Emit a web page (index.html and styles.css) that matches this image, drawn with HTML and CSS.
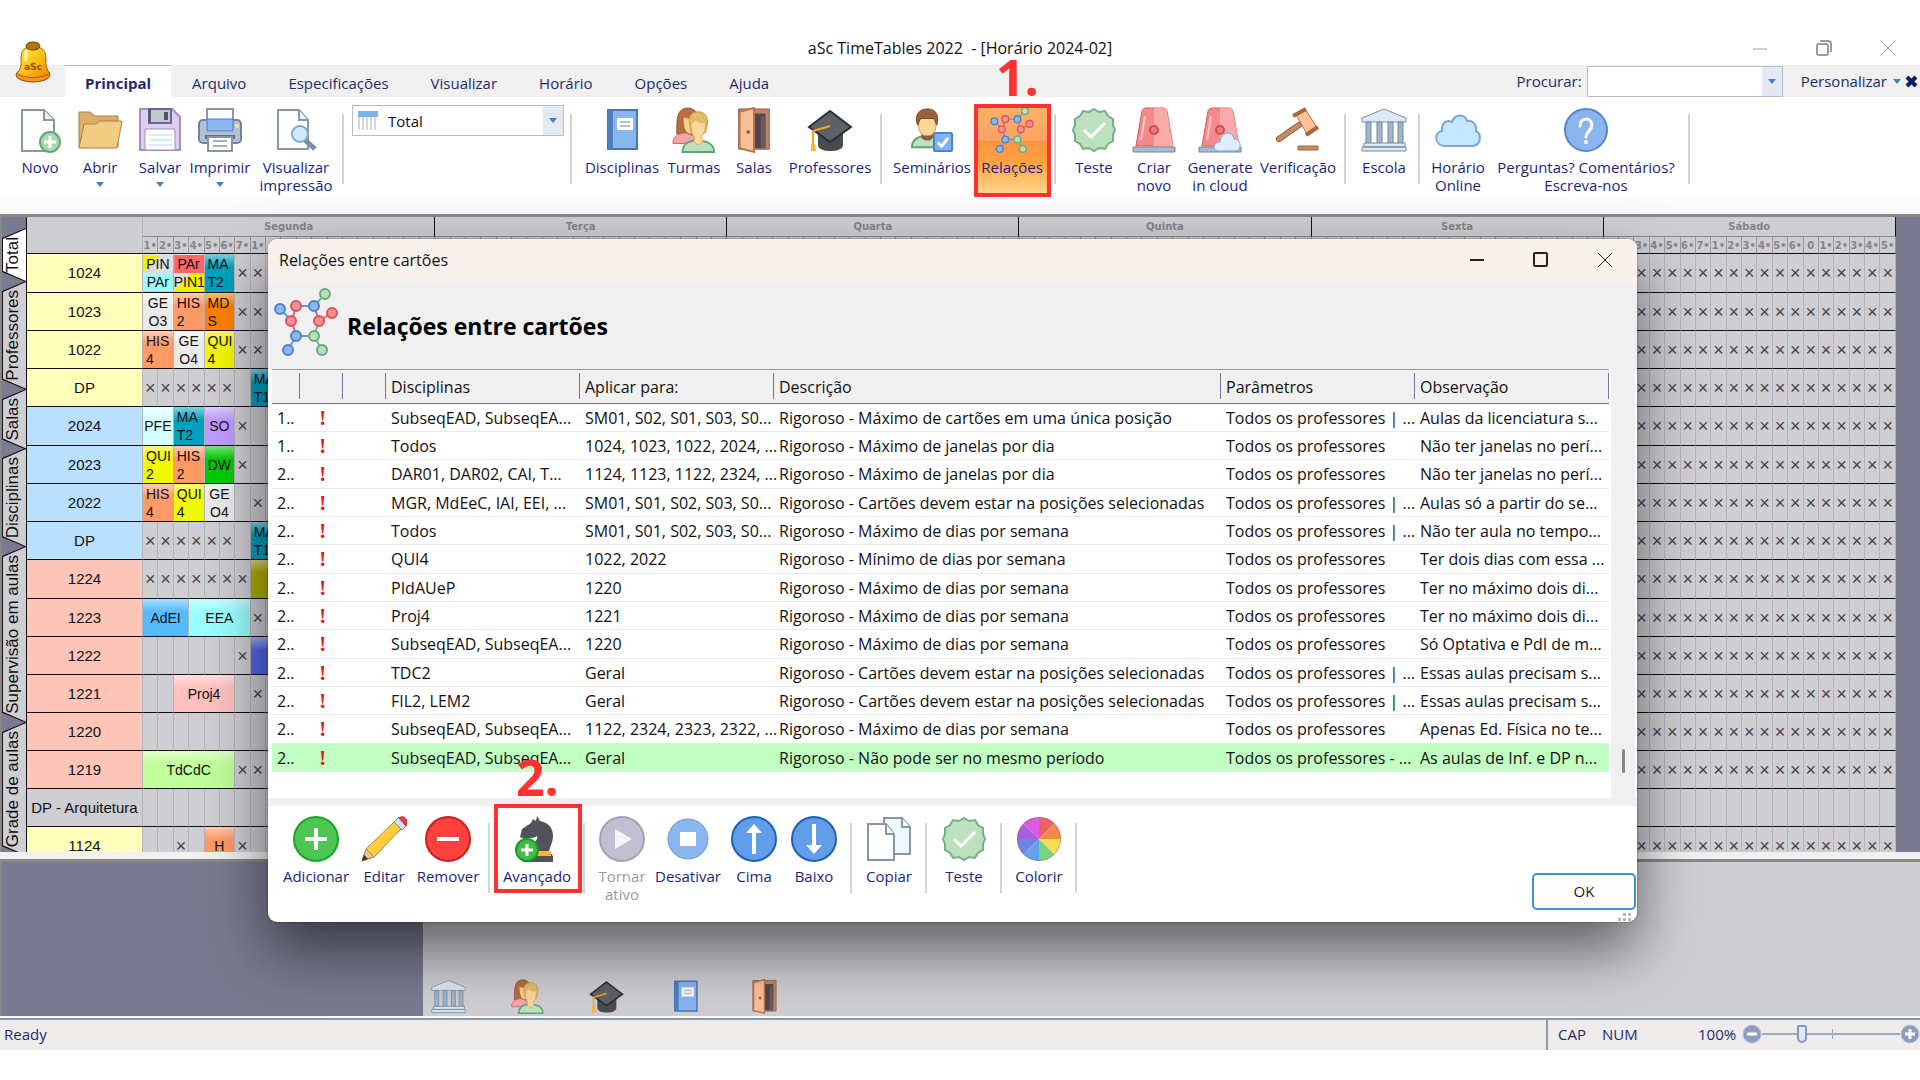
FILE: index.html
```html
<!DOCTYPE html>
<html lang="pt-BR">
<head>
<meta charset="utf-8">
<title>aSc TimeTables 2022 - [Horário 2024-02]</title>
<link rel="stylesheet" href="styles.css">
</head>
<body>
<svg class="sprite" aria-hidden="true">
  <symbol id="i-new" viewBox="0 0 44 46"><path d="M4 3h22l10 10v31H4z" fill="#fff" stroke="#8797a8" stroke-width="2"/><path d="M26 3v10h10" fill="#eef2f6" stroke="#8797a8" stroke-width="2"/><circle cx="32" cy="35" r="10" fill="#a9d8b1" stroke="#63a878" stroke-width="2"/><path d="M32 29v12M26 35h12" stroke="#fff" stroke-width="3"/></symbol>
  <symbol id="i-open" viewBox="0 0 44 46"><path d="M1 5h11l5 4h23v31H1z" fill="#dcae66" stroke="#a98243"/><path d="M6 17h12l4-3h22l-5 27H1z" fill="#f3cc83" stroke="#a98243"/></symbol>
  <symbol id="i-save" viewBox="0 0 44 46"><path d="M2 2h32l8 8v33H2z" fill="#dccff1" stroke="#a58fc2" stroke-width="2"/><path d="M11 2h22v14H11z" fill="#c0c8d2" stroke="#6d6788" stroke-width="2"/><path d="M10 2h3v14h-3z" fill="#5f5876"/><path d="M26 5h4v8h-4z" fill="#4f5868"/><path d="M7 22h30v21H7z" fill="#fff" stroke="#a58fc2"/><path d="M11 28h23M11 33h23M11 38h23" stroke="#d5edfb" stroke-width="2"/></symbol>
  <symbol id="i-print" viewBox="0 0 44 46"><path d="M9 2h26v14H9z" fill="#fff" stroke="#8797a8" stroke-width="2"/><rect x="1" y="13" width="42" height="23" rx="4" fill="#b3c2d3" stroke="#70839a" stroke-width="2"/><path d="M9 12h26v12H9z" fill="#8ab5ee" stroke="#4f7fc0"/><circle cx="39" cy="19" r="2" fill="#ffe68c"/><path d="M7 30h30" stroke="#5e6d80" stroke-width="4"/><path d="M10 30h24v14H10z" fill="#fff" stroke="#8797a8" stroke-width="2"/><path d="M15 34h14M15 39h14" stroke="#a6b1bd" stroke-width="2"/></symbol>
  <symbol id="i-preview" viewBox="0 0 44 46"><path d="M4 3h21l9 10v29H4z" fill="#fff" stroke="#8797a8" stroke-width="2"/><path d="M25 3v10h9" fill="#eef2f6" stroke="#8797a8" stroke-width="2"/><path d="m31 33 10 9" stroke="#7390ad" stroke-width="5"/><circle cx="26" cy="27" r="8" fill="#cdebff" stroke="#84a5c4" stroke-width="2"/></symbol>
  <symbol id="i-book" viewBox="0 0 44 46"><path d="M8 3h29v39H8z" fill="#8ab5ee" stroke="#4877b7" stroke-width="2"/><path d="M8 3h5v39H8z" fill="#4b7fc2"/><path d="M17 11h16v12H17z" fill="#fff"/><path d="M20 15h10M20 19h10" stroke="#b8bec6" stroke-width="2"/></symbol>
  <symbol id="i-people" viewBox="0 0 46 48"><path d="M5 28C5 12 5 2 16 1c8 0 12 6 10 14l-4 14z" fill="#b66d40" stroke="#8d5430"/><path d="M1 38c0-8 7-11 14-11l9 4-4 7z" fill="#f5a5aa" stroke="#d85d66"/><path d="M12 11l10 2v14c-6 3-10-3-10-16z" fill="#fad08a"/><path d="M11 47c0-8 6-12 15-12s18 3 18 12z" fill="#bde1bf" stroke="#5fa472" stroke-width="2"/><path d="M18 15c0-9 6-10 10-10 6 0 10 5 9 13l-2 9H20z" fill="#e2bc68" stroke="#c39b4c"/><path d="M20 18l4-5c4 4 8 3 11 3 0 8-1 11-4 15l1 5c-2 4-7 4-9 0v-5c-2-3-3-7-3-13z" fill="#fad899" stroke="#d6ad67"/></symbol>
  <symbol id="i-door" viewBox="0 0 44 48"><path d="M6 2h32v42H6z" fill="#bf8666" stroke="#8c5d45"/><path d="M22 7h12v36H22z" fill="#52444a"/><path d="M29 10h5v33h-5z" fill="#6b5960"/><path d="M7 5l15-4v46L7 43z" fill="#fbbf97" stroke="#b6764f" stroke-width="2"/><circle cx="16" cy="26" r="2" fill="#9b6144"/></symbol>
  <symbol id="i-cap" viewBox="0 0 46 46"><path d="M11 19v19c0 8 25 8 25 0V19z" fill="#4a4b4d"/><path d="M23 4l21 16-21 15L2 20z" fill="#5f6164" stroke="#26303c" stroke-width="2"/><path d="M23 19L6 24v17" fill="none" stroke="#f4a62a" stroke-width="2"/><path d="M4 37h4l1 7H4z" fill="#f9b53b"/></symbol>
  <symbol id="i-seminar" viewBox="0 0 44 48"><path d="M1 42c0-8 7-12 16-12s17 4 17 12z" fill="#bde1bf" stroke="#5fa472" stroke-width="2"/><path d="M11 26h12v6c-3 4-9 4-12 0z" fill="#8a5c3b"/><path d="M8 12h18v9c0 5-4 9-9 9s-9-4-9-9z" fill="#fad899" stroke="#c59a5a"/><path d="M7 19C3 8 9 2 17 2s13 5 10 17l-3-7H10z" fill="#9a623c" stroke="#78472a"/><rect x="24" y="27" width="19" height="19" rx="2" fill="#7fb0f0" stroke="#4a80c8" stroke-width="2"/><path d="M28 37l4 4 7-9" fill="none" stroke="#fff" stroke-width="3"/></symbol>
  <symbol id="i-net" viewBox="0 0 64 68"><path d="M6 21l12 12M22 48l-8 14M22 48l18 0M22 18h18" stroke="#6a97cf" stroke-width="2"/><path d="M22 18l-4 15 4 15M45 33l13-8M45 33l-5-15" stroke="#dd6a6d" stroke-width="2" fill="none"/><path d="M40 18L51 6M45 33l-5 15 8 14" stroke="#75b287" stroke-width="2" fill="none"/><g stroke-width="2"><g fill="#8bb7f0" stroke="#4c82c9"><circle cx="6" cy="21" r="5"/><circle cx="40" cy="18" r="5"/><circle cx="22" cy="48" r="5"/><circle cx="14" cy="62" r="5"/></g><g fill="#f78f90" stroke="#d9565a"><circle cx="22" cy="18" r="5"/><circle cx="58" cy="25" r="5"/><circle cx="45" cy="33" r="5"/><circle cx="17" cy="33" r="5"/></g><g fill="#b7dfba" stroke="#69ab7d"><circle cx="51" cy="6" r="5"/><circle cx="40" cy="48" r="5"/><circle cx="48" cy="62" r="5"/></g></g></symbol>
  <symbol id="i-check" viewBox="0 0 44 46"><path d="M22 2l5 3 6-1 3 5 5 3 0 6 2 5-2 5 0 6-5 3-3 5-6-1-5 3-5-3-6 1-3-5-5-3 0-6-2-5 2-5 0-6 5-3 3-5 6 1z" fill="#bde1bf" stroke="#72b088" stroke-width="2"/><path d="M12 23l7 7 14-14" fill="none" stroke="#fff" stroke-width="3"/></symbol>
  <symbol id="i-siren" viewBox="0 0 44 46"><path d="M4 39L10 4q1-3 4-3h17q3 0 4 3l6 35z" fill="#f48b8b" stroke="#d9585c"/><path d="M22 1h9q3 0 4 3l6 35H22z" fill="#f8a9a9"/><path d="M13 9L9 33" stroke="#fbc9c9" stroke-width="2"/><circle cx="22" cy="23" r="4" fill="#ee7c7e" stroke="#d04c52" stroke-width="2"/><path d="M1 40h42v5H1z" fill="#a9bac9" stroke="#7389a0"/></symbol>
  <symbol id="i-sirencloud" viewBox="0 0 44 46"><use href="#i-siren" width="44" height="46"/><path d="M20 44c-6-1-5-9 2-9 1-11 13-12 14-3 7 0 9 11 1 12z" fill="#dceeff" stroke="#7fa5d0"/></symbol>
  <symbol id="i-gavel" viewBox="0 0 44 46"><path d="M3 32l20-14" stroke="#8f5d3c" stroke-width="6" stroke-linecap="round"/><path d="M3 32l20-14" stroke="#c98c62" stroke-width="4" stroke-linecap="round"/><path d="M20 8l10-5 11 18-10 6z" fill="#fdc19b" stroke="#a8704c"/><path d="M17 9l13-7M30 28l12-8" stroke="#a5683f" stroke-width="4"/><path d="M22 39h20v4H22z" fill="#c98c62" stroke="#9a6644"/></symbol>
  <symbol id="i-school" viewBox="0 0 46 46"><path d="M23 2l22 9v4H1v-4z" fill="#dfe8f0" stroke="#7b93ac"/><path d="M5 15h5v22H5zM16 15h5v22h-5zM27 15h5v22h-5zM37 15h5v22h-5z" fill="#a2b5ca" stroke="#6f89a4"/><path d="M3 36h41v4H3zM1 40h44v4H1z" fill="#dfe8f0" stroke="#6f89a4"/></symbol>
  <symbol id="i-cloud" viewBox="0 0 46 46"><path d="M9 39C-1 38-1 25 7 24 6 16 12 12 17 15 20 6 31 7 32 14c6-1 10 4 9 10 6 3 5 14-3 15z" fill="#c3e7ff" stroke="#7ea6cf" stroke-width="2"/></symbol>
  <symbol id="i-help" viewBox="0 0 46 46"><circle cx="23" cy="23" r="21" fill="#8ab5ee" stroke="#5486c9" stroke-width="2"/><path d="M17 19c0-9 12-9 12-1 0 6-6 6-6 12" fill="none" stroke="#fff" stroke-width="3" stroke-linecap="round"/><circle cx="23" cy="35" r="2" fill="#fff"/></symbol>
  <symbol id="i-add" viewBox="0 0 46 46"><circle cx="23" cy="23" r="22" fill="#4cc552" stroke="#1ca32a" stroke-width="2"/><path d="M23 12v22M12 23h22" stroke="#fff" stroke-width="4"/></symbol>
  <symbol id="i-remove" viewBox="0 0 46 46"><circle cx="23" cy="23" r="22" fill="#ff423d" stroke="#c62020" stroke-width="2"/><path d="M12 23h22" stroke="#fff" stroke-width="4"/></symbol>
  <symbol id="i-edit" viewBox="0 0 46 46"><path d="M1 45l4-12L35 4l7 7L13 41z" fill="#ffcc3d" stroke="#a8884a"/><path d="M1 45l4-12 8 8z" fill="#efc292" stroke="#a8884a"/><path d="M1 45l2-6 4 4z" fill="#333"/><path d="M33 6l5-5 8 8-5 5z" fill="#d2e2f4" stroke="#74899f"/><path d="M38 2q4-3 7 1t0 7z" fill="#f23b3b" stroke="#c02828"/></symbol>
  <symbol id="i-knight" viewBox="0 0 46 46"><path d="M9 46v-4l5-5c0-8 11-11 9-17-4 3-8 1-11 4l-6-3 2-8 9-6 2-4 3 2 1-5 3 5c12 2 16 13 11 24l-2 6 4 5v6z" fill="#50545a"/><path d="M18 35h19v5H18z" fill="#ffb43b"/><circle cx="13" cy="34" r="11" fill="#3fbd48" stroke="#1b9b2a" stroke-width="2"/><path d="M13 28v12M7 34h12" stroke="#fff" stroke-width="3"/></symbol>
  <symbol id="i-play" viewBox="0 0 46 46"><circle cx="23" cy="23" r="22" fill="#c2bfd0" stroke="#a5a0ba" stroke-width="2"/><path d="M16 13l17 10-17 10z" fill="#f6f5fa"/></symbol>
  <symbol id="i-stop" viewBox="0 0 46 46"><circle cx="23" cy="23" r="20" fill="#8ab5ee" stroke="#7099cc"/><path d="M15 16h16v14H15z" fill="#fff"/></symbol>
  <symbol id="i-up" viewBox="0 0 46 46"><circle cx="23" cy="23" r="22" fill="#629de9" stroke="#1c61bb" stroke-width="2"/><path d="M23 38V14" stroke="#fff" stroke-width="4"/><path d="M15 17l8-9 8 9z" fill="#fff"/></symbol>
  <symbol id="i-down" viewBox="0 0 46 46"><circle cx="23" cy="23" r="22" fill="#629de9" stroke="#1c61bb" stroke-width="2"/><path d="M23 8v24" stroke="#fff" stroke-width="4"/><path d="M15 29l8 9 8-9z" fill="#fff"/></symbol>
  <symbol id="i-copy" viewBox="0 0 46 46"><path d="M18 2h18l8 9v27H18z" fill="#eff7ff" stroke="#8797a8" stroke-width="2"/><path d="M36 2v9h8" fill="#fff" stroke="#8797a8" stroke-width="2"/><path d="M2 8h18l8 10v26H2z" fill="#fff" stroke="#8797a8" stroke-width="2"/><path d="M20 8v10h8" fill="#fff" stroke="#8797a8" stroke-width="2"/></symbol>
  <symbol id="i-wheel" viewBox="0 0 46 46"><g transform="translate(23 23)"><path d="M0 0V-22A22 22 0 0 1 15.6-15.6z" fill="#e96161"/><path d="M0 0L15.6-15.6A22 22 0 0 1 22 0z" fill="#f08a4b"/><path d="M0 0H22A22 22 0 0 1 15.6 15.6z" fill="#ffdc57"/><path d="M0 0L15.6 15.6A22 22 0 0 1 0 22z" fill="#78d47c"/><path d="M0 0V22A22 22 0 0 1-15.6 15.6z" fill="#64a0ec"/><path d="M0 0L-15.6 15.6A22 22 0 0 1-22 0z" fill="#6e84e6"/><path d="M0 0H-22A22 22 0 0 1-15.6-15.6z" fill="#ac5ee0"/><path d="M0 0L-15.6-15.6A22 22 0 0 1 0-22z" fill="#dc5be0"/><circle r="21.5" fill="none" stroke="#8e6a86" stroke-opacity=".5"/></g></symbol>
  <symbol id="i-caret" viewBox="0 0 8 5"><path d="M0 0h8L4 5z" fill="#4a7fb8"/></symbol>
</svg>

<header class="titlebar">
  <h1 class="title">aSc TimeTables 2022&nbsp; - [Horário 2024-02]</h1>
  <div class="wincontrols">
    <button aria-label="Minimizar"><svg width="16" height="16"><path d="M1 9h14" stroke="#999"/></svg></button>
    <button aria-label="Restaurar"><svg width="16" height="16" fill="none" stroke="#999" stroke-width="2"><rect x="1" y="4" width="11" height="11" rx="2"/><path d="M4 1h8q3 0 3 3v8"/></svg></button>
    <button aria-label="Fechar"><svg width="16" height="16"><path d="M1 1l14 14M15 1L1 15" stroke="#999"/></svg></button>
  </div>
</header>

<nav class="menubar">
  <div class="logo"><svg width="38" height="42" viewBox="0 0 38 42"><defs><linearGradient id="bell" x2="1" y2="1"><stop stop-color="#ffe94a"/><stop offset=".5" stop-color="#fdc414"/><stop offset="1" stop-color="#ef7c0a"/></linearGradient></defs><ellipse cx="19" cy="34" rx="17" ry="7" fill="#f59511" stroke="#8d4a0b"/><path d="M3 32q5-4 4-14C7 9 10 6 19 6s13 3 13 12q-1 10 4 14c-6 6-27 6-33 0z" fill="url(#bell)" stroke="#a4620c"/><ellipse cx="19" cy="5" rx="7" ry="4" fill="#b5740f" stroke="#6e3d05"/><ellipse cx="12" cy="15" rx="2" ry="6" fill="#fff6a0"/><text x="19" y="29" class="bell-text">aSc</text></svg></div>
  <a class="tab tab-on" href="#principal">Principal</a>
  <a class="tab" href="#arquivo">Arquivo</a>
  <a class="tab" href="#especificacoes">Especificações</a>
  <a class="tab" href="#visualizar">Visualizar</a>
  <a class="tab" href="#horario">Horário</a>
  <a class="tab" href="#opcoes">Opções</a>
  <a class="tab" href="#ajuda">Ajuda</a>
  <div class="search">
    <label for="busca">Procurar:</label>
    <div class="field"><input id="busca" type="text"><button aria-label="Buscas recentes"><svg width="8" height="5"><use href="#i-caret"/></svg></button></div>
    <button class="custom">Personalizar <svg width="8" height="5"><use href="#i-caret"/></svg></button>
    <button class="closedoc" aria-label="Fechar horário"><svg width="13" height="13"><path d="M2 2l9 9M11 2l-9 9" stroke="#0b1f5c" stroke-width="4"/></svg></button>
  </div>
</nav>

<div class="ribbon">
  <div class="group">
    <button class="tool"><svg><use href="#i-new"/></svg>Novo</button>
    <button class="tool"><svg><use href="#i-open"/></svg>Abrir<svg class="caret"><use href="#i-caret"/></svg></button>
    <button class="tool"><svg><use href="#i-save"/></svg>Salvar<svg class="caret"><use href="#i-caret"/></svg></button>
    <button class="tool"><svg><use href="#i-print"/></svg>Imprimir<svg class="caret"><use href="#i-caret"/></svg></button>
    <button class="tool w92"><svg><use href="#i-preview"/></svg><span>Visualizar<br>impressão</span></button>
  </div>
  <div class="group">
    <div class="combo">
      <svg width="20" height="20"><path d="M0 0h20v20H0z" fill="#fff"/><path d="M1 6v13M5 6v13M9 6v13M13 6v13M17 6v13" stroke="#a3b2c4"/><path d="M0 0h20v6H0z" fill="#7db4ea"/></svg>
      <select aria-label="Visão"><option>Total</option></select>
      <span class="drop"><svg width="8" height="5"><use href="#i-caret"/></svg></span>
    </div>
  </div>
  <div class="group">
    <button class="tool w84"><svg><use href="#i-book"/></svg>Disciplinas</button>
    <button class="tool"><svg><use href="#i-people"/></svg>Turmas</button>
    <button class="tool"><svg><use href="#i-door"/></svg>Salas</button>
    <button class="tool w92"><svg><use href="#i-cap"/></svg>Professores</button>
  </div>
  <div class="group">
    <button class="tool w84"><svg><use href="#i-seminar"/></svg>Seminários</button>
    <button class="tool w76 tool-on"><svg><use href="#i-net"/></svg>Relações<span class="mark"><b>1.</b></span></button>
  </div>
  <div class="group">
    <button class="tool"><svg><use href="#i-check"/></svg>Teste</button>
    <button class="tool"><svg><use href="#i-siren"/></svg><span>Criar<br>novo</span></button>
    <button class="tool w72"><svg><use href="#i-sirencloud"/></svg><span>Generate<br>in cloud</span></button>
    <button class="tool w84"><svg><use href="#i-gavel"/></svg>Verificação</button>
  </div>
  <div class="group"><button class="tool"><svg><use href="#i-school"/></svg>Escola</button></div>
  <div class="group">
    <button class="tool"><svg><use href="#i-cloud"/></svg><span>Horário<br>Online</span></button>
    <button class="tool w196"><svg><use href="#i-help"/></svg><span>Perguntas? Comentários?<br>Escreva-nos</span></button>
  </div>
</div>

<main class="work">
  <div class="upper">
    <div class="sidetabs">
      <button class="side side-on">Total</button>
      <button class="side">Professores</button>
      <button class="side">Salas</button>
      <button class="side">Disciplinas</button>
      <button class="side">Supervisão em aulas</button>
      <button class="side">Grade de aulas</button>
    </div>
    <table class="sheet" id="sheet"></table>
  </div>
  <div class="splitter"></div>
  <div class="lower">
    <div class="lower-left"></div>
    <div class="shortcuts">
      <button aria-label="Escola"><svg><use href="#i-school"/></svg></button>
      <button aria-label="Turmas"><svg><use href="#i-people"/></svg></button>
      <button aria-label="Professores"><svg><use href="#i-cap"/></svg></button>
      <button aria-label="Disciplinas"><svg><use href="#i-book"/></svg></button>
      <button aria-label="Salas"><svg><use href="#i-door"/></svg></button>
    </div>
  </div>
</main>

<footer class="status">
  <span class="ready">Ready</span>
  <div class="indicators"><span>CAP</span><span>NUM</span></div>
  <div class="zoom">
    <label for="zoom">100%</label>
    <button aria-label="Diminuir"><svg width="20" height="20"><circle cx="10" cy="10" r="9" fill="#8d9cc0" stroke="#b9c3da"/><path d="M5 10h10" stroke="#fff" stroke-width="3"/></svg></button>
    <input id="zoom" type="range" min="0" max="100" value="28">
    <button aria-label="Aumentar"><svg width="20" height="20"><circle cx="10" cy="10" r="9" fill="#8d9cc0" stroke="#b9c3da"/><path d="M5 10h10M10 5v10" stroke="#fff" stroke-width="3"/></svg></button>
  </div>
</footer>

<section class="dialog" role="dialog" aria-labelledby="dlg-title">
  <div class="dlg-caption">
    <span>Relações entre cartões</span>
    <div class="dlg-controls">
      <button aria-label="Minimizar"><svg width="16" height="16"><path d="M1 8h14" stroke="#222" stroke-width="2"/></svg></button>
      <button aria-label="Maximizar"><svg width="16" height="16"><rect x="1" y="1" width="13" height="13" rx="1" fill="none" stroke="#222" stroke-width="2"/></svg></button>
      <button aria-label="Fechar"><svg width="16" height="16"><path d="M1 1l14 14M15 1L1 15" stroke="#222"/></svg></button>
    </div>
  </div>
  <div class="dlg-head"><svg width="64" height="68"><use href="#i-net"/></svg><h2 id="dlg-title">Relações entre cartões</h2></div>
  <div class="list">
    <table class="rules">
      <colgroup><col class="c-n"><col class="c-i"><col class="c-i"><col class="c-t"><col class="c-t"><col><col class="c-t"><col class="c-t"></colgroup>
      <thead><tr><th></th><th></th><th></th><th>Disciplinas</th><th>Aplicar para:</th><th>Descrição</th><th>Parâmetros</th><th>Observação</th></tr></thead>
      <tbody id="rules"></tbody>
    </table>
    <div class="scroll"><div class="thumb"></div></div>
  </div>
  <div class="dlg-tools">
    <div class="group">
      <button class="tool w76"><svg><use href="#i-add"/></svg>Adicionar</button>
      <button class="tool"><svg><use href="#i-edit"/></svg>Editar</button>
      <button class="tool w68"><svg><use href="#i-remove"/></svg>Remover</button>
    </div>
    <div class="group"><button class="tool w80"><svg><use href="#i-knight"/></svg>Avançado<span class="mark"><b>2.</b></span></button></div>
    <div class="group">
      <button class="tool" disabled><svg><use href="#i-play"/></svg><span>Tornar<br>ativo</span></button>
      <button class="tool w72"><svg><use href="#i-stop"/></svg>Desativar</button>
      <button class="tool"><svg><use href="#i-up"/></svg>Cima</button>
      <button class="tool"><svg><use href="#i-down"/></svg>Baixo</button>
    </div>
    <div class="group"><button class="tool"><svg><use href="#i-copy"/></svg>Copiar</button></div>
    <div class="group"><button class="tool"><svg><use href="#i-check"/></svg>Teste</button></div>
    <div class="group"><button class="tool"><svg><use href="#i-wheel"/></svg>Colorir</button></div>
    <div class="dlg-actions">
      <button class="ok">OK</button>
      <svg class="grip" width="14" height="10" fill="#bbb"><path d="M5 0h3v3H5zM10 0h3v3h-3zM0 5h3v3H0zM5 5h3v3H5zM10 5h3v3h-3z"/></svg>
    </div>
  </div>
</section>
<script src="app.js"></script>
</body>
</html>
```

FILE: styles.css
```css
* { box-sizing: border-box; }
body {
  margin: 0;
  padding: 30px 0;
  height: 100vh;
  display: flex;
  flex-direction: column;
  position: relative;
  overflow: hidden;
  background: #fff;
  color: #111;
  font: 15px/18px "Open Sans", "Noto Sans", sans-serif;
}
button { font: inherit; color: inherit; border: 0; background: none; padding: 0; }
.sprite { position: absolute; width: 0; height: 0; }

.titlebar { flex: none; height: 35px; display: grid; grid-template-columns: 1fr auto 1fr; align-items: center; }
.title { grid-column: 2; margin: 0; font-size: 16px; font-weight: 400; line-height: 20px; }
.wincontrols { display: flex; justify-content: flex-end; gap: 48px; padding-right: 24px; }
.wincontrols button, .dlg-controls button { width: 16px; height: 16px; }
.wincontrols svg, .dlg-controls svg { display: block; }

.menubar { flex: none; height: 32px; display: flex; background: #f0f0f0; color: #1f2a6b; }
.logo { width: 65px; padding-left: 14px; position: relative; }
.logo svg { position: absolute; top: -24px; }
.bell-text { font: bold 9px "DejaVu Sans", sans-serif; text-anchor: middle; fill: #9c4a08; }
.tab { padding: 0 21px; line-height: 36px; color: inherit; text-decoration: none; }
.tab-on { background: #fff; padding: 0 20px; border-top: 1px solid #b8b8b8; line-height: 34px; font-weight: 700; }
.search { margin-left: auto; display: flex; align-items: center; padding-right: 2px; }
.field { display: flex; width: 196px; height: 31px; margin: 0 18px 0 5px; border: 1px solid #b4bccf; background: #fff; }
.field input { flex: 1; min-width: 0; border: 0; outline: 0; font: inherit; }
.field button, .drop { width: 20px; background: #e4e8f3; display: flex; align-items: center; justify-content: center; }
.custom { display: flex; align-items: center; gap: 6px; }
.closedoc { margin-left: 4px; height: 14px; }
.closedoc svg { display: block; }

.ribbon { flex: none; height: 117px; display: flex; align-items: flex-start; background: linear-gradient(#fff 80%, #f8f8f8); }
.group { display: flex; margin-top: 8px; padding: 0 4px 0 8px; position: relative; }
.group::after { content: ""; position: absolute; right: -2px; top: 9px; width: 2px; height: 70px; background: #d4d4d4; }
.group + .group { margin-left: 2px; }
.ribbon .group { height: 88px; }
.ribbon .group:first-child { padding: 0 0 0 10px; }
.tool { width: 60px; height: 88px; display: flex; flex-direction: column; align-items: center; padding-top: 2px; text-align: center; white-space: nowrap; color: #1c1f80; position: relative; }
.tool svg { display: block; flex: none; width: 46px; height: 46px; margin: 0 auto 5px; }
.tool .caret { width: 8px; height: 5px; margin: 6px auto 0; }
.tool:disabled { color: #999; }
.w68 { width: 68px; }
.w72 { width: 72px; }
.w76 { width: 76px; }
.w80 { width: 80px; }
.w84 { width: 84px; }
.w92 { width: 92px; }
.w196 { width: 196px; }
.tool-on { background: linear-gradient(#fbb463, #fba368 40%, #fd9440 41%, #ffa23e 65%, #ffd68c); }
.mark { position: absolute; inset: -1px -1px -4px 0; border: 4px solid #ff3131; color: #ff3131; font-size: 50px; line-height: 50px; text-align: left; }
.mark b { display: block; margin: -56px 0 0; padding-left: 18px; }

.combo { display: flex; align-items: center; width: 212px; height: 31px; margin-right: 2px; border: 1px solid #b4bccf; background: #fff; padding-left: 5px; }
.combo select { flex: 1; appearance: none; border: 0; background: none; font: inherit; color: #111; padding: 0 10px; outline: 0; }
.drop { align-self: stretch; }

.work { flex: 1; min-height: 0; display: flex; flex-direction: column; border-top: 3px solid #888; border-left: 2px solid #888; background: #7a7a90; }
.upper { flex: 1; min-height: 0; display: flex; align-items: flex-start; overflow: hidden; padding-right: 24px; }
.sidetabs { flex: none; width: 25px; align-self: stretch; border-right: 1px solid #111; padding-top: 11px; overflow: hidden; }
.side { display: block; position: relative; z-index: 0; width: 24px; margin-bottom: -1px; padding: 9px 0 9px 2px; writing-mode: vertical-rl; font: 17px/22px "Liberation Sans", Arial, sans-serif; color: #111; transform: rotate(180deg); }
.side::before, .side::after { content: ""; position: absolute; z-index: -1; inset: 0; background: #111; clip-path: polygon(0 0, 100% 10px, 100% calc(100% - 10px), 0 100%); }
.side::after { inset: 1px 1px 1px 0; background: #cfced3; }
.side-on::after { background: #fff; }

.sheet { flex: 1; width: 100%; table-layout: fixed; border-spacing: 0; background: #cfced3; font: 14px/18px "Liberation Sans", Arial, sans-serif; }
.sheet th, .sheet td { padding: 0; overflow: hidden; white-space: nowrap; text-align: center; border-bottom: 1px solid #111; border-right: 1px solid #b4b3b8; }
.sheet .name { width: 116px; }
.sheet .day { height: 20px; font: bold 10px/18px "DejaVu Sans", sans-serif; color: #858588; border-bottom-color: #888; border-right-color: #111; }
.sheet .hour { height: 17px; font: bold 10px/15px "DejaVu Sans", sans-serif; color: #858588; border-right-color: #999; }
.sheet .row { height: 38px; }
.sheet .first { height: 39px; }
.sheet .row th { font-size: 15px; font-weight: 400; }
.sheet .yellow th { background: #ffffbb; }
.sheet .blue th { background: #b9e0ff; }
.sheet .pink th { background: #ffc5b8; }
.sheet .off { font-size: 18px; color: #444; }
.sheet .card { background-image: linear-gradient(rgba(255,255,255,.5), transparent 35%); }
.sheet .left { text-align: left; padding-left: 3px; }
.half { display: block; line-height: 18px; }
.k-teal { background-color: #00a0c0; }
.k-cyan { background-color: #99ffff; }
.k-red { background-color: #ff6666; }
.k-mix { background: linear-gradient(135deg, #f2f200 35%, #ddd 36%); }
.k-mix2 { background: linear-gradient(135deg, #ddd 35%, #f2f200 36%); }
.k-white { background-color: #ebebeb; }
.k-salmon { background-color: #ff9966; }
.k-orange { background-color: #ff8000; }
.k-yellow { background-color: #f2f800; }
.k-ice { background-color: #d5ffff; }
.k-violet { background-color: #bf9bff; }
.k-green { background-color: #00cc00; }
.k-olive { background-color: #b0b000; }
.k-sky { background-color: #55bbff; }
.k-indigo { background-color: #5566e8; }
.k-rose { background-color: #ffc0c0; }
.k-lime { background-color: #c0ff99; }

.splitter { flex: none; height: 10px; background: #f0f0f0; border-bottom: 3px solid #888; margin-left: -2px; }
.lower { flex: none; height: 154px; display: flex; }
.lower-left { width: 421px; }
.shortcuts { flex: 1; display: flex; align-items: flex-end; background: #cfced3; padding: 0 0 2px 8px; gap: 44px; }
.shortcuts button { height: 35px; }
.shortcuts svg { display: block; width: 35px; height: 35px; }

.status { flex: none; height: 34px; display: flex; align-items: center; border-top: 2px solid #fff; box-shadow: inset 0 2px #8f9bb3; background: #f0eceb; color: #1f2a6b; }
.ready { flex: 1; padding-left: 4px; }
.indicators { display: flex; gap: 16px; align-self: stretch; align-items: center; border-left: 2px solid #8f9bb3; padding-left: 10px; width: 152px; }
.zoom { display: flex; align-items: center; width: 222px; }
.zoom label { width: 44px; }
.zoom button, .zoom svg { display: block; width: 20px; height: 20px; flex: none; }
.zoom input { appearance: none; width: 140px; height: 20px; margin: 0; background: linear-gradient(#9aa8c4, #9aa8c4) 0 9px / 100% 2px no-repeat, linear-gradient(#9aa8c4, #9aa8c4) 70px 5px / 1px 10px no-repeat; }
.zoom input::-webkit-slider-thumb { appearance: none; width: 10px; height: 18px; background: #dfe7f5; border: 2px solid #8496bd; border-radius: 2px 2px 5px 5px; }

.dialog { position: absolute; left: 268px; right: 283px; top: 239px; background: #fff; border-radius: 9px; box-shadow: 0 0 2px rgba(0,0,0,.5), 0 28px 60px rgba(0,0,0,.55); }
.dlg-caption { height: 43px; display: flex; align-items: center; justify-content: space-between; padding: 0 24px 2px 11px; background: #f9f1ec; border-radius: 9px 9px 0 0; font-size: 16px; }
.dlg-controls { display: flex; gap: 48px; }
.dlg-head { height: 87px; display: flex; align-items: center; gap: 9px; padding: 0 6px 8px; background: #f0f0f0; }
.dlg-head h2 { margin: 8px 0 0; font-size: 23px; line-height: 28px; color: #000; }
.list { height: 437px; display: flex; align-items: flex-start; padding: 0 2px 0 4px; border-bottom: 8px solid #f0f0f0; background: #fff; }
.rules { flex: 1; width: 100%; table-layout: fixed; border-spacing: 0; border-top: 1px solid #999; font-size: 16px; line-height: 20px; }
.c-n { width: 28px; }
.c-i { width: 43px; }
.c-t { width: 194px; }
.rules th { height: 34px; padding: 0 0 0 5px; text-align: left; font-weight: 400; background: linear-gradient(#73739a, #73739a) right 3px / 1px 26px no-repeat #f0f0f0; border-bottom: 1px solid #777; }
.rules td { height: 28px; padding: 0 0 0 5px; white-space: nowrap; border-bottom: 1px solid #e8e8e4; }
.rules tr:nth-child(3n) td { height: 29px; }
.rules .urgent { padding-left: 19px; color: #f01818; font: bold 22px/20px "Liberation Serif", serif; }
.rules .picked { background: #c2ffc2; }
.scroll { flex: none; width: 26px; align-self: stretch; background: #f0f0f0; border: 0 solid #fff; border-left-width: 2px; padding: 380px 0 0 11px; }
.thumb { width: 3px; height: 24px; border-radius: 2px; background: #888; }
.dlg-tools { display: flex; height: 116px; }
.dlg-tools .group { padding: 0 6px 0 7px; }
.dlg-tools .group:first-child { padding-left: 10px; }
.dlg-tools .mark { inset: -10px -5px 9px -3px; }
.dlg-actions { margin-left: auto; display: flex; flex-direction: column; align-items: flex-end; padding: 67px 1px 0 0; gap: 3px; }
.ok { width: 104px; height: 39px; border: 2px solid #3b93d8; border-radius: 5px; background: #fdfdfd; color: #222; }
.grip { margin-right: 4px; }
```

FILE: app.js
```js
const days = ['Segunda', 'Terça', 'Quarta', 'Quinta', 'Sexta', 'Sábado'];
const hours = [1, 2, 3, 4, 5, 6, 7, 1, 2, 3, 4, 5, 6, 0, 1, 2, 3, 4, 5];
const X = 'x';
const gap = n => Array(n).fill('');
const off = n => Array(n).fill(X);
const mat1 = [2, 'MA<br>T1', 'teal left'];

// Each row: [name, colour group, cells for the start of the week, Saturday blocked]
const rows = [
  ['1024', 'yellow', [[2, '<span class="half k-mix">PIN</span><span class="half k-cyan">PAr</span>', ''], [2, '<span class="half k-red">PAr</span><span class="half k-mix2">PIN1</span>', ''], [2, 'MA<br>T2', 'teal left'], X, X], 1],
  ['1023', 'yellow', [[2, 'GE<br>O3', 'white'], [2, 'HIS<br>2', 'salmon left'], [2, 'MD<br>S', 'orange left'], X, X], 1],
  ['1022', 'yellow', [[2, 'HIS<br>4', 'salmon left'], [2, 'GE<br>O4', 'white'], [2, 'QUI<br>4', 'yellow left'], X, X], 1],
  ['DP', 'yellow', [...off(6), '', mat1], 1],
  ['2024', 'blue', [[2, 'PFE', 'ice'], [2, 'MA<br>T2', 'teal left'], [2, 'SO', 'violet'], X, ''], 1],
  ['2023', 'blue', [[2, 'QUI<br>2', 'yellow left'], [2, 'HIS<br>2', 'salmon left'], [2, 'DW', 'green'], X, ''], 1],
  ['2022', 'blue', [[2, 'HIS<br>4', 'salmon left'], [2, 'QUI<br>4', 'yellow left'], [2, 'GE<br>O4', 'white'], '', X], 1],
  ['DP', 'blue', [...off(6), '', mat1], 1],
  ['1224', 'pink', [...off(7), [2, '', 'olive']], 1],
  ['1223', 'pink', [[3, 'AdEI', 'sky'], [4, 'EEA', 'cyan'], X], 1],
  ['1222', 'pink', [...gap(6), X, [2, '', 'indigo']], 1],
  ['1221', 'pink', ['', '', [4, 'Proj4', 'rose'], '', X], 1],
  ['1220', 'pink', gap(8), 1],
  ['1219', 'pink', [[6, 'TdCdC', 'lime'], X, X], 1],
  ['DP - Arquitetura', 'plain', gap(8), 0],
  ['1124', 'yellow', ['', '', X, '', [2, 'H', 'salmon'], X, ''], 1]
];

const total = days.length * hours.length;
const cell = c => c === X ? '<td class="off">×</td>'
  : c === '' ? '<td></td>'
  : `<td colspan="${c[0]}" class="card ${c[2] ? 'k-' + c[2] : ''}">${c[1]}</td>`;

let html = '<colgroup><col class="name">' + '<col>'.repeat(total) + '</colgroup><thead><tr><th rowspan="2"></th>';
html += days.map(d => `<th class="day" colspan="${hours.length}">${d}</th>`).join('') + '</tr><tr>';
html += days.map((d, i) => hours.map((h, j) => {
  const shown = (i === 0 && j < 8) || (i === 5 && j > 1);
  return `<th class="hour">${shown ? (h ? h + '•' : h) : ''}</th>`;
}).join('')).join('') + '</tr></thead><tbody>';
rows.forEach(([name, tone, cells, blocked], i) => {
  const used = cells.reduce((n, c) => n + (Array.isArray(c) ? c[0] : 1), 0);
  const first = i === 0 || i === 4 || i === 8;
  html += `<tr class="row ${tone}${first ? ' first' : ''}"><th>${name}</th>` + cells.map(cell).join('')
    + '<td></td>'.repeat(total - used - 17) + cell(blocked ? X : '').repeat(17) + '</tr>';
});
document.getElementById('sheet').innerHTML = html + '</tbody>';

const all = 'Todos os professores';
const rules = [
  ['1..', 'SubseqEAD, SubseqEA...', 'SM01, S02, S01, S03, S0...', 'Máximo de cartões em uma única posição', all + ' | ...', 'Aulas da licenciatura s...'],
  ['1..', 'Todos', '1024, 1023, 1022, 2024, ...', 'Máximo de janelas por dia', all, 'Não ter janelas no perí...'],
  ['2..', 'DAR01, DAR02, CAI, T...', '1124, 1123, 1122, 2324, ...', 'Máximo de janelas por dia', all, 'Não ter janelas no perí...'],
  ['2..', 'MGR, MdEeC, IAI, EEI, ...', 'SM01, S01, S02, S03, S0...', 'Cartões devem estar na posições selecionadas', all + ' | ...', 'Aulas só a partir do se...'],
  ['2..', 'Todos', 'SM01, S01, S02, S03, S0...', 'Máximo de dias por semana', all + ' | ...', 'Não ter aula no tempo...'],
  ['2..', 'QUI4', '1022, 2022', 'Mínimo de dias por semana', all, 'Ter dois dias com essa ...'],
  ['2..', 'PIdAUeP', '1220', 'Máximo de dias por semana', all, 'Ter no máximo dois di...'],
  ['2..', 'Proj4', '1221', 'Máximo de dias por semana', all, 'Ter no máximo dois di...'],
  ['2..', 'SubseqEAD, SubseqEA...', '1220', 'Máximo de dias por semana', all, 'Só Optativa e PdI de m...'],
  ['2..', 'TDC2', 'Geral', 'Cartões devem estar na posições selecionadas', all + ' | ...', 'Essas aulas precisam s...'],
  ['2..', 'FIL2, LEM2', 'Geral', 'Cartões devem estar na posições selecionadas', all + ' | ...', 'Essas aulas precisam s...'],
  ['2..', 'SubseqEAD, SubseqEA...', '1122, 2324, 2323, 2322, ...', 'Máximo de dias por semana', all, 'Apenas Ed. Física no te...'],
  ['2..', 'SubseqEAD, SubseqEA...', 'Geral', 'Não pode ser no mesmo período', all + ' - ...', 'As aulas de Inf. e DP n...']
];
document.getElementById('rules').innerHTML = rules.map((r, i) =>
  `<tr${i === rules.length - 1 ? ' class="picked"' : ''}><td>${r[0]}</td><td class="urgent">!</td><td></td><td>${r[1]}</td><td>${r[2]}</td><td>Rigoroso - ${r[3]}</td><td>${r[4]}</td><td>${r[5]}</td></tr>`
).join('');
```
